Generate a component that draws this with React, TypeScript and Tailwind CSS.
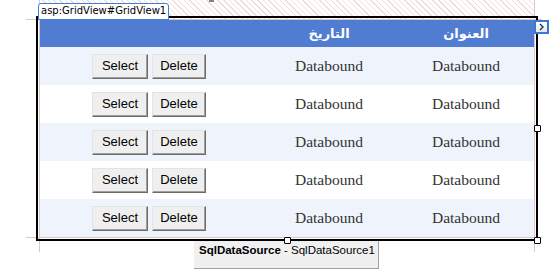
import React from "react";

const rows = [0, 1, 2, 3, 4];

const Btn = ({ label, w }: { label: string; w: string }) => (
  <button
    className={`${w} h-[25px] bg-[#efefef] text-[13px] text-black border border-t-[#e3e3e3] border-l-[#e3e3e3] border-r-[#6b6b6b] border-b-[#6b6b6b] shadow-[inset_-1px_-1px_0_#a0a0a0] flex items-center justify-center`}
  >
    {label}
  </button>
);

const Handle = ({ pos }: { pos: string }) => (
  <div className={`absolute ${pos} w-[7px] h-[7px] rounded-[1px] border border-black bg-white`} />
);

export default function App() {
  return (
    <div className="relative w-[560px] h-[280px] overflow-hidden bg-white pt-[16px] font-['Liberation_Sans',Arial,sans-serif]">
      {/* design surface: hatched top margin + guides */}
      <div className="absolute left-[39px] top-0 w-[495px] h-[20px] bg-[image:repeating-linear-gradient(45deg,#f1dcdc_0px,#f1dcdc_1px,#ffffff_1px,#ffffff_4px)]" />
      <div className="absolute left-[209px] top-0 w-[5px] h-[2px] bg-[#8a7f78]" />
      <div className="absolute left-[26px] top-[19px] w-[516px] h-[219px] border-y border-[#dcc6c6]" />
      <div className="absolute left-[39px] top-0 w-[496px] h-[252px] border-x border-[#dcc6c6]" />

      {/* selected GridView */}
      <div className="relative z-10 ml-[36px] w-[502px] border-2 border-black p-[2px]">
        <div className="w-[494px] text-[#333333]">
          <div className="grid grid-cols-[220px_138px_136px] h-[27px] bg-[#507cd1] text-white font-bold text-[13px] font-['DejaVu_Sans',sans-serif]">
            <div />
            <div className="flex items-center justify-center" dir="rtl">التاريخ</div>
            <div className="flex items-center justify-center" dir="rtl">العنوان</div>
          </div>
          {rows.map((r) => (
            <div
              key={r}
              className={`grid grid-cols-[220px_138px_136px] h-[38px] ${r % 2 === 0 ? "bg-[#eff3fb]" : "bg-white"}`}
            >
              <div className="flex items-center justify-center gap-[4px] pr-[2px]">
                <Btn label="Select" w="w-[56px]" />
                <Btn label="Delete" w="w-[54px]" />
              </div>
              <div className="flex items-center justify-center text-[15.5px] font-['Liberation_Serif',serif]">
                Databound
              </div>
              <div className="flex items-center justify-center text-[15.5px] font-['Liberation_Serif',serif]">
                Databound
              </div>
            </div>
          ))}
        </div>

        <div className="absolute left-[496px] top-[2px] w-[15px] h-[14px] border-2 border-[#3a78d6] bg-[linear-gradient(#ffffff,#e6e6e6)] flex items-center justify-center">
          <svg width="7" height="8" viewBox="0 0 7 8">
            <path d="M2 1 L5 4 L2 7" fill="none" stroke="#1d3557" strokeWidth="1.4" />
          </svg>
        </div>
        <Handle pos="left-[496px] top-[107px]" />
        <Handle pos="left-[496px] top-[219px]" />
        <Handle pos="left-[246px] top-[219px]" />
      </div>

      {/* data source control */}
      <div className="ml-[194px] -mt-[1px] w-[185px] h-[29px] bg-[#f0f0f0] border-r border-b border-[#a0a0a0] pl-[5px] pt-[2px] text-[11.5px] text-black">
        <span className="font-bold">SqlDataSource</span> - SqlDataSource1
      </div>

      <div className="absolute z-20 left-[38px] top-[3px] h-[17px] px-[2px] border border-[#3c7fd6] rounded-t-[3px] bg-white text-[10px] leading-[14px] text-black font-['DejaVu_Sans',sans-serif]">
        asp:GridView#GridView1
      </div>
    </div>
  );
}
